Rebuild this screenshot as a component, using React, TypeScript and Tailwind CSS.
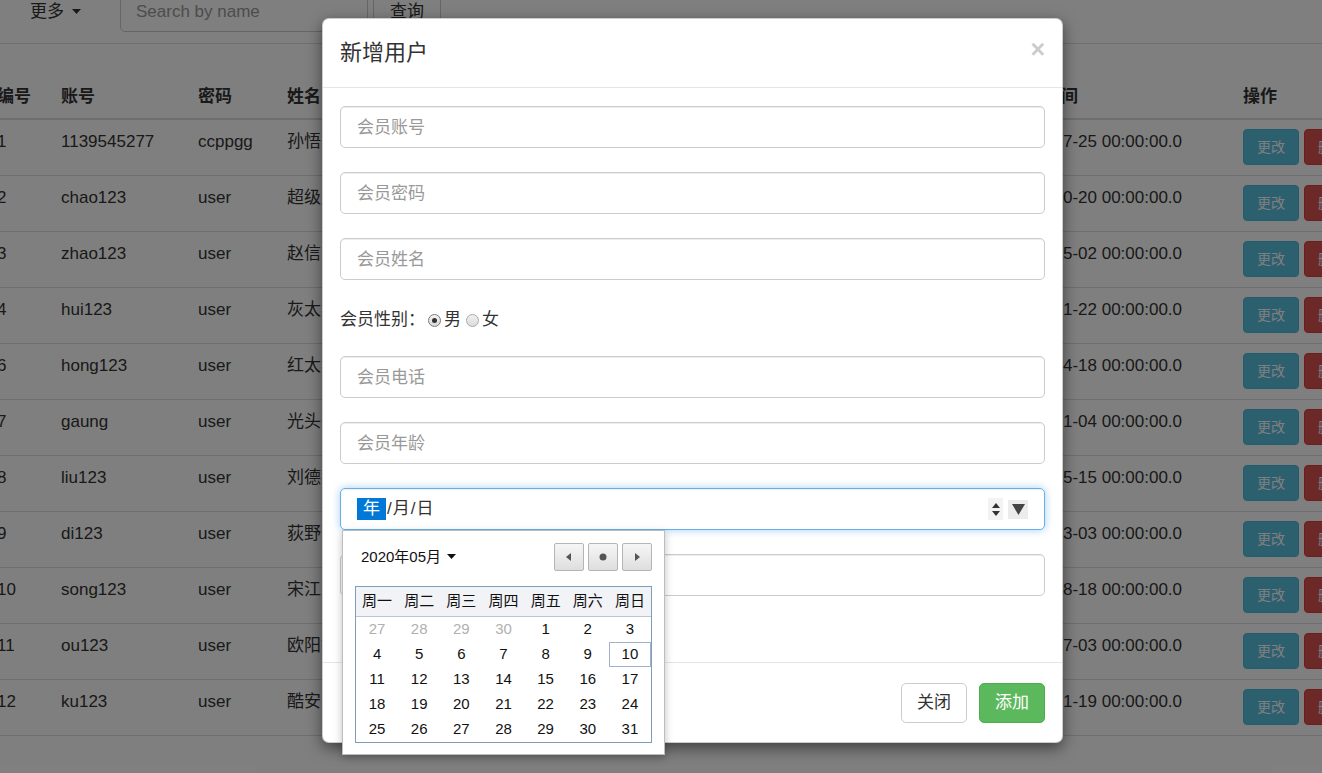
import React from "react";

const rows: string[][] = [
  ["1", "1139545277", "ccppgg", "孙悟空", "男", "13800000001", "18", "花果山", "2019-07-25 00:00:00.0"],
  ["2", "chao123", "user", "超级用户", "男", "13800000002", "20", "北京", "2019-10-20 00:00:00.0"],
  ["3", "zhao123", "user", "赵信", "男", "13800000003", "25", "德玛西亚", "2020-05-02 00:00:00.0"],
  ["4", "hui123", "user", "灰太狼", "男", "13800000004", "30", "狼堡", "2020-01-22 00:00:00.0"],
  ["6", "hong123", "user", "红太狼", "女", "13800000006", "28", "狼堡", "2020-04-18 00:00:00.0"],
  ["7", "gaung", "user", "光头强", "男", "13800000007", "32", "狗熊岭", "2020-01-04 00:00:00.0"],
  ["8", "liu123", "user", "刘德华", "男", "13800000008", "45", "香港", "2020-05-15 00:00:00.0"],
  ["9", "di123", "user", "荻野千寻", "女", "13800000009", "12", "东京", "2020-03-03 00:00:00.0"],
  ["10", "song123", "user", "宋江", "男", "13800000010", "40", "梁山", "2020-08-18 00:00:00.0"],
  ["11", "ou123", "user", "欧阳锋", "男", "13800000011", "50", "白驼山", "2020-07-03 00:00:00.0"],
  ["12", "ku123", "user", "酷安", "男", "13800000012", "22", "上海", "2020-01-19 00:00:00.0"],
];

const headers = ["编号", "账号", "密码", "姓名", "性别", "电话", "年龄", "地址", "入会时间", "操作"];

const gridCols =
  "grid grid-cols-[64px_137px_89px_141px_100px_180px_100px_202px_233px_165px]";

function Caret({ className }: { className?: string }) {
  return (
    <svg width="9" height="6" viewBox="0 0 9 6" className={className}>
      <polygon points="0,0 9,0 4.5,5" fill="currentColor" />
    </svg>
  );
}

function Radio({ checked }: { checked?: boolean }) {
  return (
    <span
      className={
        "inline-flex w-[13px] h-[13px] rounded-full border items-center justify-center " +
        (checked
          ? "border-[#7a7a7a] bg-[linear-gradient(#f4f4f4,#d8d8d8)]"
          : "border-[#a9a9a9] bg-[linear-gradient(#f0f0f0,#dcdcdc)]")
      }
    >
      {checked && <span className="w-[5px] h-[5px] rounded-full bg-[#333]" />}
    </span>
  );
}

function TextBox({ placeholder }: { placeholder: string }) {
  return (
    <div className="h-[42px] mb-[24px] border border-[#ccc] rounded-[5px] shadow-[inset_0_1px_1px_rgba(0,0,0,0.075)] flex items-center px-[16px] pt-[1px] text-[17px] text-[#999]">
      {placeholder}
    </div>
  );
}

function NavBtn({ children }: { children: React.ReactNode }) {
  return (
    <div className="w-[30px] h-[28px] border border-[#b5b5b5] rounded-[2px] bg-[linear-gradient(#f6f6f6,#dedede)] flex items-center justify-center text-[#555]">
      {children}
    </div>
  );
}

const calRows: { d: string; muted?: boolean; sel?: boolean }[][] = [
  [{ d: "27", muted: true }, { d: "28", muted: true }, { d: "29", muted: true }, { d: "30", muted: true }, { d: "1" }, { d: "2" }, { d: "3" }],
  [{ d: "4" }, { d: "5" }, { d: "6" }, { d: "7" }, { d: "8" }, { d: "9" }, { d: "10", sel: true }],
  [{ d: "11" }, { d: "12" }, { d: "13" }, { d: "14" }, { d: "15" }, { d: "16" }, { d: "17" }],
  [{ d: "18" }, { d: "19" }, { d: "20" }, { d: "21" }, { d: "22" }, { d: "23" }, { d: "24" }],
  [{ d: "25" }, { d: "26" }, { d: "27" }, { d: "28" }, { d: "29" }, { d: "30" }, { d: "31" }],
];

function Calendar() {
  return (
    <div className="absolute left-[19px] top-[511px] w-[323px] h-[225px] bg-white border border-[#bdbdbd] shadow-[0_3px_8px_rgba(0,0,0,0.25)] px-[12px] pt-[12px] z-20">
      <div className="flex items-center justify-between h-[28px]">
        <div className="flex items-center pl-[6px] text-[15px] text-[#111] gap-[6px]">
          <span>2020年05月</span>
          <Caret className="text-[#111]" />
        </div>
        <div className="flex gap-[4px]">
          <NavBtn>
            <svg width="6" height="8" viewBox="0 0 6 8">
              <polygon points="5,0 5,8 0,4" fill="currentColor" />
            </svg>
          </NavBtn>
          <NavBtn>
            <svg width="8" height="8" viewBox="0 0 8 8">
              <circle cx="4" cy="4" r="3.5" fill="currentColor" />
            </svg>
          </NavBtn>
          <NavBtn>
            <svg width="6" height="8" viewBox="0 0 6 8">
              <polygon points="1,0 1,8 6,4" fill="currentColor" />
            </svg>
          </NavBtn>
        </div>
      </div>
      <div className="mt-[15px] w-[297px] border border-[#7f9db9]">
        <div className="grid grid-cols-7 h-[30px] bg-[#f1f3f7] border-b border-[#b8c6d6] text-[15px] text-[#111]">
          {["周一", "周二", "周三", "周四", "周五", "周六", "周日"].map((w) => (
            <div key={w} className="flex items-center justify-center">
              {w}
            </div>
          ))}
        </div>
        {calRows.map((r, i) => (
          <div key={i} className="grid grid-cols-7 h-[25px] text-[15px]">
            {r.map((c, j) => (
              <div
                key={j}
                className={
                  "flex items-center justify-center " +
                  (c.muted ? "text-[#b0b0b0] " : "text-[#111] ") +
                  (c.sel ? "border border-[#9fb4cc]" : "")
                }
              >
                {c.d}
              </div>
            ))}
          </div>
        ))}
      </div>
    </div>
  );
}

export default function App() {
  return (
    <div className="relative w-[1322px] h-[773px] overflow-hidden bg-white text-[#333] font-[family-name:'Liberation_Sans','Noto_Sans_CJK_SC',sans-serif]">
      {/* background page */}
      <div className="mt-[-9px] flex items-center pb-[11px] border-b border-[#ddd]">
        <div className="h-[41px] ml-[30px] flex items-center gap-[8px] text-[17px]">
          <span>更多</span>
          <Caret className="text-[#333]" />
        </div>
        <div className="ml-[39px] w-[248px] h-[41px] border border-[#ccc] rounded-[5px] flex items-center px-[15px] text-[17px] text-[#999]">
          Search by name
        </div>
        <div className="ml-[5px] w-[68px] h-[41px] border border-[#ccc] rounded-[5px] flex items-center justify-center text-[17px]">
          查询
        </div>
      </div>

      <div className="mt-[31px] ml-[-13px]">
        <div className={gridCols + " h-[45px] border-b-2 border-[#ddd] font-bold text-[17px]"}>
          {headers.map((h) => (
            <div key={h} className="px-[10px] pt-[10px] leading-[24px] whitespace-nowrap">
              {h}
            </div>
          ))}
        </div>
        {rows.map((r) => (
          <div key={r[0]} className={gridCols + " h-[56px] border-b border-[#ddd] text-[17px]"}>
            {r.map((c, i) => (
              <div key={i} className="px-[10px] pt-[10px] leading-[24px] whitespace-nowrap overflow-hidden">
                {c}
              </div>
            ))}
            <div className="px-[10px] pt-[9px] flex gap-[5px]">
              <div className="h-[36px] px-[13px] rounded-[4px] bg-[#5bc0de] border border-[#46b8da] text-white text-[14px] flex items-center">
                更改
              </div>
              <div className="h-[36px] px-[13px] rounded-[4px] bg-[#d9534f] border border-[#d43f3a] text-white text-[14px] flex items-center">
                删除
              </div>
            </div>
          </div>
        ))}
      </div>

      {/* backdrop */}
      <div className="absolute inset-0 bg-black/50" />

      {/* modal */}
      <div className="absolute left-[322px] top-[18px] w-[741px] h-[725px] bg-white rounded-[7px] border border-black/20 shadow-[0_5px_15px_rgba(0,0,0,0.5)] flex flex-col z-10">
        <div className="h-[69px] shrink-0 border-b border-[#e5e5e5] flex items-center justify-between pl-[17px] pr-[17px]">
          <span className="text-[22px] text-[#333] mt-[-2px]">新增用户</span>
          <span className="text-[25px] font-bold text-black opacity-20 leading-none mt-[-8px]">×</span>
        </div>
        <div className="flex-1 px-[17px] pt-[18px]">
          <TextBox placeholder="会员账号" />
          <TextBox placeholder="会员密码" />
          <TextBox placeholder="会员姓名" />
          <div className="h-[30px] mb-[22px] flex items-center pt-[2px] text-[17px] text-[#333]">
            <span>会员性别：</span>
            <span className="ml-[3px] mr-[3px] flex"><Radio checked /></span>
            <span>男</span>
            <span className="ml-[5px] mr-[3px] flex"><Radio /></span>
            <span>女</span>
          </div>
          <TextBox placeholder="会员电话" />
          <TextBox placeholder="会员年龄" />
          <div className="h-[42px] mb-[24px] border border-[#66afe9] rounded-[5px] shadow-[inset_0_1px_1px_rgba(0,0,0,0.075),0_0_8px_rgba(102,175,233,0.6)] flex items-center pl-[16px] pr-[16px] text-[17px] text-[#333]">
            <span className="bg-[#0078d7] text-white px-[6px] leading-[22px]">年</span>
            <span className="px-[1px]">/</span>
            <span>月</span>
            <span className="px-[1px]">/</span>
            <span>日</span>
            <div className="ml-auto flex items-center gap-[5px]">
              <div className="w-[15px] h-[22px] bg-[#f3f3f3] flex flex-col items-center justify-center gap-[3px]">
                <svg width="8" height="5" viewBox="0 0 8 5">
                  <polygon points="0,5 8,5 4,0" fill="#333" />
                </svg>
                <svg width="8" height="5" viewBox="0 0 8 5">
                  <polygon points="0,0 8,0 4,5" fill="#333" />
                </svg>
              </div>
              <div className="w-[20px] h-[19px] bg-[#ececec] flex items-center justify-center">
                <svg width="13" height="11" viewBox="0 0 13 11">
                  <polygon points="0,0 13,0 6.5,11" fill="#444" />
                </svg>
              </div>
            </div>
          </div>
          <TextBox placeholder="" />
        </div>
        <div className="h-[80px] shrink-0 border-t border-[#e5e5e5] flex items-center justify-end px-[17px] gap-[12px]">
          <div className="h-[40px] px-[15px] border border-[#ccc] rounded-[5px] bg-white text-[17px] text-[#333] flex items-center">
            关闭
          </div>
          <div className="h-[40px] px-[15px] border border-[#4cae4c] rounded-[5px] bg-[#5cb85c] text-[17px] text-white flex items-center">
            添加
          </div>
        </div>
        <Calendar />
      </div>
    </div>
  );
}
